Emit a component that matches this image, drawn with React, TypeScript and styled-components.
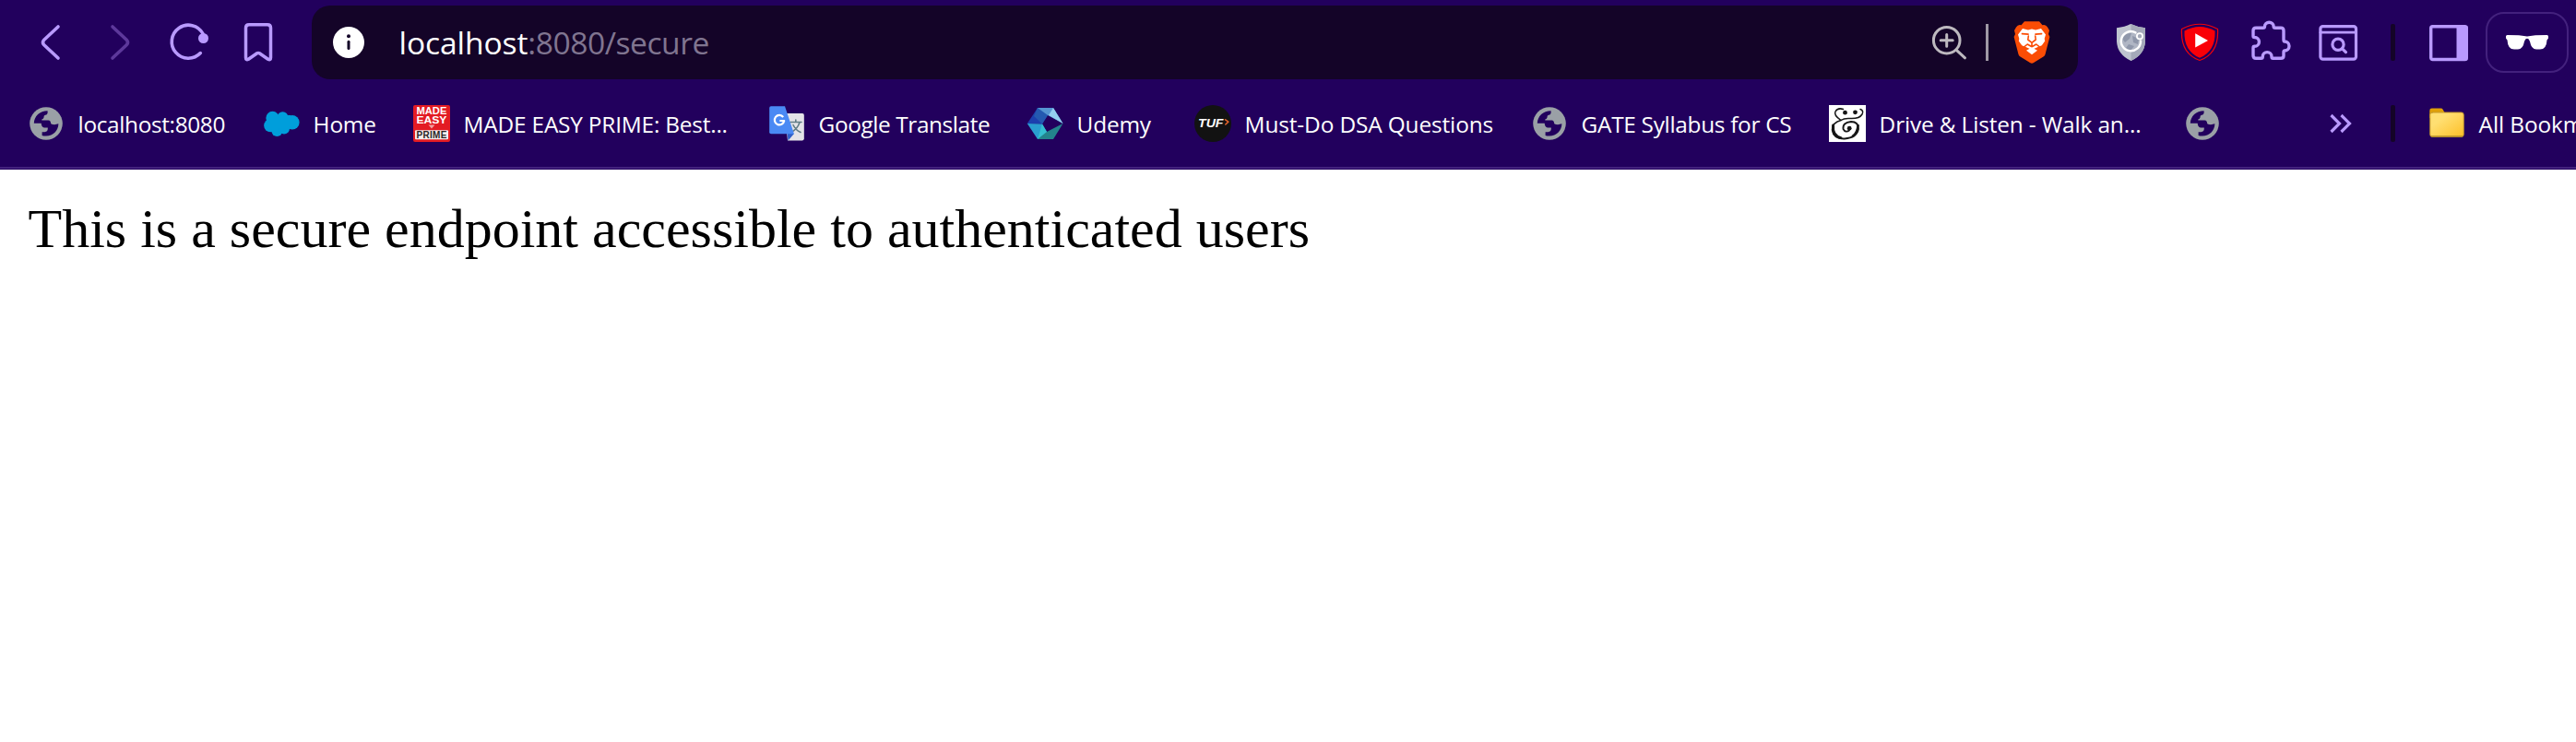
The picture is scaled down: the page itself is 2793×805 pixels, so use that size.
import React from 'react';
import styled, { createGlobalStyle } from 'styled-components';

const LILAC = '#b99aff';
const PURPLE = '#22005d';
const UI_FONT = '"Open Sans", "Noto Sans", sans-serif';

const GlobalStyle = createGlobalStyle`
  html, body { margin: 0; padding: 0; background: #fff; }
  body { overflow: hidden; }
  svg { display: block; flex: none; }
`;

const Window = styled.div`
  width: 2793px;
  height: 805px;
  overflow: hidden;
  display: flex;
  flex-direction: column;
  background: #fff;
`;

const Chrome = styled.header`
  background: ${PURPLE};
  height: 184px;
  box-sizing: border-box;
  display: flex;
  flex-direction: column;
  flex: none;
  overflow: hidden;
`;

const Toolbar = styled.div`
  height: 92px;
  display: flex;
  align-items: center;
  padding-left: 31px;
`;

const IconGroup = styled.div`
  display: flex;
  align-items: center;
  gap: 27px;
`;

const AddressBar = styled.div`
  display: flex;
  align-items: center;
  box-sizing: border-box;
  width: 1915px;
  height: 80px;
  margin: 0 33px 0 34px;
  padding: 0 26px 0 16px;
  border-radius: 20px;
  background: #140428;
`;

const Url = styled.div`
  flex: 1;
  margin-left: 30.5px;
  font: 400 33.6px/46px ${UI_FONT};
  letter-spacing: -0.45px;
  color: #807590;
  white-space: pre;
`;

const Host = styled.span`
  color: #fff;
  letter-spacing: -0.1px;
`;

const AddressDivider = styled.div`
  width: 3px;
  height: 40px;
  margin: 0 23px 0 16px;
  background: #9f99a5;
`;

const Divider = styled.div<{ $before: number; $after: number }>`
  width: 5px;
  height: 40px;
  border-radius: 2px;
  background: #140428;
  flex: none;
  margin: 0 ${(p) => p.$after}px 0 ${(p) => p.$before}px;
`;

const PrivatePill = styled.div`
  display: flex;
  align-items: center;
  justify-content: center;
  box-sizing: border-box;
  width: 90px;
  height: 66px;
  margin-left: 16px;
  border: 2px solid #43217d;
  border-radius: 20px;
  flex: none;
`;

const BookmarksBar = styled.div`
  height: 89px;
  display: flex;
  align-items: center;
  padding-left: 30px;
  box-sizing: border-box;
  padding-bottom: 5px;
`;

const BookmarkItem = styled.div<{ $width: number }>`
  width: ${(p) => p.$width}px;
  height: 40px;
  display: flex;
  align-items: center;
  gap: 14.6px;
  flex: none;
`;

const Label = styled.span<{ $tracking: number }>`
  padding-top: 2px;
  font: 400 24.4px/34px ${UI_FONT};
  letter-spacing: ${(p) => p.$tracking}px;
  color: #fff;
  white-space: nowrap;
`;

const ChromeEdge = styled.div`
  height: 2px;
  background: #43217d;
`;

const Page = styled.main`
  padding: 30px 30.5px;
`;

const Message = styled.div`
  font: 400 60px/69px "Liberation Serif", serif;
  color: #000;
  white-space: nowrap;
`;

function Icon({ size = 48, children }: { size?: number; children: React.ReactNode }) {
  return (
    <svg width={size} height={size} viewBox={`0 0 ${size} ${size}`} fill="none" strokeLinecap="round" strokeLinejoin="round">
      {children}
    </svg>
  );
}

const BackIcon = () => (
  <Icon><path d="M32 7 L16.5 21.5 Q14.5 24 16.5 26.5 L32 41" stroke={LILAC} strokeWidth="3.6" /></Icon>
);
const ForwardIcon = () => (
  <Icon><path d="M16 7 L31.5 21.5 Q33.5 24 31.5 26.5 L16 41" stroke="#5d389b" strokeWidth="3.6" /></Icon>
);
const ReloadIcon = () => (
  <Icon>
    <path d="M36.3 35.6 A18 18 0 1 1 39 14.5" stroke={LILAC} strokeWidth="3.6" />
    <circle cx="39.5" cy="19.5" r="5.5" fill={LILAC} />
  </Icon>
);
const BookmarkIcon = () => (
  <Icon>
    <path d="M14 4.8 H34 Q37.5 4.8 37.5 8.3 V40.5 Q37.5 43.6 34.6 42.2 L25.3 35.8 Q24 35 22.7 35.8 L13.4 42.2 Q10.5 43.6 10.5 40.5 V8.3 Q10.5 4.8 14 4.8Z" stroke={LILAC} strokeWidth="3.5" />
  </Icon>
);
const InfoIcon = () => (
  <Icon>
    <circle cx="24" cy="24" r="17" fill="#fff" />
    <circle cx="24" cy="17.3" r="2" fill="#140428" />
    <path d="M24 23.3 V30.6" stroke="#140428" strokeWidth="3" />
  </Icon>
);
const ZoomIcon = () => (
  <Icon>
    <g stroke="#bdb9bf" strokeWidth="3">
      <circle cx="21.7" cy="21.7" r="14.3" />
      <path d="M32.3 32.3 L41.5 40.8 M21.7 15.5 V28.3 M15.2 21.8 H28.2" />
    </g>
  </Icon>
);
const BraveIcon = () => (
  <Icon>
    <path d="M16 1.2 H32 L35.5 5.2 Q39 4 41 7.5 L43 11 L42 15 L43.4 18 L38.5 37 Q38 38.5 36.5 39.5 L26 46 Q24 47.4 22 46 L11.5 39.5 Q10 38.5 9.5 37 L4.6 18 L6 15 L5 11 L7 7.5 Q9 4 12.5 5.2Z" fill="#fb4d05" />
    <path d="M14 9 L20 10.5 L24 9.6 L28 10.5 L34 9 L39 15.5 L37.7 20 L38.2 22.5 L34.8 27.2 L30 29.3 L24 32 L18 29.3 L13.2 27.2 L9.8 22.5 L10.3 20 L9 15.5Z" fill="#fff" />
    <path d="M13.5 14.6 L20 15.2 M28 15.2 L34.5 14.6" stroke="#fb4d05" strokeWidth="1.8" />
    <path d="M20.3 17 L19.8 21 L24 24.3 L28.2 21 L27.7 17 M24 24.3 V27 M16 28.6 L19.2 26 L24 28.8 L28.8 26 L32 28.6" stroke="#fb4d05" strokeWidth="1.6" />
    <path d="M24 29.4 L30 32.7 L24 37.2 L18 32.7Z" fill="#fff" />
  </Icon>
);
const GuardIcon = () => (
  <Icon>
    <path d="M24 4 Q31 7.2 40 8.3 V23 Q39.3 37 24.5 44 Q9.7 37 9 23 V8.3 Q18 7.2 24 4Z" fill="#bfc4cf" />
    <path d="M24.5 4 Q31 7.2 40 8.3 V23 Q39.3 37 24.5 44Z" fill="#a5aab9" />
    <circle cx="24.5" cy="22.8" r="10.5" fill="#b0b6c4" />
    <path d="M15 20 Q19 13 25 14 L23 20 L18 24Z M26 17 L33 20 L32 26 L27 24Z M22 26 L28 28 L24 33 L19 30Z" fill="#8f97aa" />
    <path d="M29.5 13.4 A10.6 10.6 0 1 0 35 22.5" stroke="#fff" strokeWidth="2.4" />
    <circle cx="34" cy="17.3" r="3.1" fill="#a5aab9" stroke="#fff" strokeWidth="1.8" />
  </Icon>
);
const VideoShieldIcon = () => (
  <Icon>
    <path d="M4.5 9.5 Q24 -1 43.5 9.5 Q45 36 24 43.5 Q3 36 4.5 9.5Z" stroke="#f0000a" strokeWidth="1.2" />
    <path d="M7.5 11.5 Q24 2.5 40.5 11.5 Q41.5 33.5 24 40.8 Q6.5 33.5 7.5 11.5Z" fill="#f90008" />
    <path d="M19.2 14.2 V29.6 L33 22Z" fill="#fff" />
  </Icon>
);
const PuzzleIcon = () => (
  <Icon>
    <path
      d="M10 8.3 H17.5 Q19.5 8.3 19.5 6.5 A4.8 4.3 0 0 1 29.1 6.5 Q29.1 8.3 31 8.3 H37 Q40 8.3 40 11.3 V21 Q40 23 41 23 A5 5 0 0 1 41 33 Q40 33 40 35 V38.5 Q40 41.3 37 41.3 H28.5 Q27 41.3 27 39.5 A4.8 4.8 0 0 0 17.3 39.5 Q17.3 41.3 15.5 41.3 H10 Q7 41.3 7 38.3 V30 Q7 28.3 8.5 28.3 A4.9 4.9 0 0 0 8.5 18.5 Q7 18.5 7 17 V11.3 Q7 8.3 10 8.3Z"
      stroke={LILAC}
      strokeWidth="3.4"
    />
  </Icon>
);
const SearchWindowIcon = () => (
  <Icon>
    <g stroke={LILAC} strokeWidth="3.2">
      <rect x="4.9" y="6.6" width="38.6" height="35.6" rx="2.6" />
      <path d="M5 13.2 H43" strokeWidth="2.8" />
      <circle cx="24" cy="26.2" r="6.1" />
      <path d="M28.6 30.8 L32.4 34.6" />
    </g>
  </Icon>
);
const SidebarIcon = () => (
  <Icon>
    <rect x="4.7" y="6.7" width="38.6" height="35.8" rx="1.8" stroke={LILAC} strokeWidth="3.4" />
    <rect x="32.5" y="6" width="12" height="37" rx="1" fill={LILAC} />
  </Icon>
);
const GlassesIcon = () => (
  <Icon>
    <path d="M1 17.5 Q1 16 2.5 16 L15 16.3 L24 17.6 L33 16.3 L45.5 16 Q47 16 47 17.5 V19.5 L45.5 21.5 Q45 31.5 38 31.6 H34 Q28.5 31.5 27 23 Q26 19.8 24 19.8 Q22 19.8 21 23 Q19.5 31.5 14 31.6 H10 Q3 31.5 2.5 21.5 L1 19.5Z" fill="#fff" />
  </Icon>
);

const GlobeIcon = () => (
  <Icon size={40}>
    <circle cx="20" cy="20" r="17.8" fill="#9aa0a6" />
    <path d="M6.8 19.8 C7 12 13.5 6.2 21.6 6.3 V8.8 Q21.4 10.8 18.6 11 Q17.4 11.4 17.5 13.5 Q17.3 15 15.3 15.4 V16.6 H22.5 Q25 16.9 25.2 20.2 Q28.5 22 33.4 20.3 C33.2 28 27.5 33.7 19.8 33.6 Q17.5 33.7 15.6 33 V29.3 H18.4 Q21.8 28.8 21.8 25.8 V24.4 H18 Q14.9 24 14.7 19.8Z" fill={PURPLE} />
  </Icon>
);
const CloudIcon = () => (
  <Icon size={40}>
    <g fill="#009edb">
      <circle cx="10.5" cy="14" r="7.2" />
      <circle cx="21.5" cy="13.3" r="6" />
      <circle cx="31.8" cy="18.8" r="7.8" />
      <circle cx="8.2" cy="22.2" r="7" />
      <circle cx="15.3" cy="28" r="6" />
      <circle cx="23" cy="25.5" r="6" />
      <rect x="8" y="11" width="22" height="14" />
    </g>
  </Icon>
);
const MadeEasyIcon = () => (
  <Icon size={40}>
    <rect width="40" height="40" rx="2" fill="#e31b23" />
    <rect x="2" y="27.2" width="36" height="10" rx="1" fill="#f4eeee" />
    <g fontFamily='"Liberation Sans", sans-serif' fontWeight="700" fontSize="10">
      <text x="3.4" y="10.2" textLength="33" lengthAdjust="spacingAndGlyphs" fill="#fff">MADE</text>
      <text x="3.4" y="19.6" textLength="33" lengthAdjust="spacingAndGlyphs" fill="#fff">EASY</text>
      <text x="3.4" y="35.8" textLength="33" lengthAdjust="spacing" fill="#2b2626">PRIME</text>
    </g>
    <path d="M16.5 21.5 H23.5 L20 25.5Z" fill="#f0a0a0" />
  </Icon>
);
const TranslateIcon = () => (
  <Icon size={40}>
    <path d="M18 9 H37 Q38.8 9 38.8 10.8 V36.6 Q38.8 38.4 37 38.4 H21Z" fill="#e4e4e8" />
    <path d="M24 18.5 H36 M29.8 16 V18.5 M34 18.8 Q32 25.5 25 29.5 M27 21.5 Q29.5 27 35 29.5" stroke="#607d86" strokeWidth="1.6" />
    <path d="M20.5 31 H28 L21.5 38.5Z" fill="#3060c8" />
    <path d="M3 1.3 H18 L28 31.3 H3 Q1.2 31.3 1.2 29.5 V3.1 Q1.2 1.3 3 1.3Z" fill="#4a8af4" />
    <path d="M16.2 13 A5.2 5.2 0 1 0 17.2 17 H12.4" stroke="#fff" strokeWidth="2.2" strokeLinecap="butt" />
  </Icon>
);
const UdemyIcon = () => (
  <Icon size={40}>
    <path d="M12 3 L0.8 20 L17 20.5 L23 11Z" fill="#1c3fae" />
    <path d="M12 3 H29 L23 11 L10 13Z" fill="#2c64ac" />
    <path d="M12 3 L23 11 L17 20.5 L8 12Z" fill="#2459b0" />
    <path d="M29 3 L39.5 20 L23 11 L12 3Z" fill="#5596d2" />
    <path d="M29 3 L39.5 20 L24 11Z" fill="#94cdf0" />
    <path d="M0.8 20 L17 20.5 L22 29 L12 37Z" fill="#2a9fd0" />
    <path d="M17 20.5 L22 29 L29 37 H12Z" fill="#35bfd0" />
    <path d="M39.5 20 L22 29 L12 37 H29Z" fill="#23848c" />
  </Icon>
);
const TufIcon = () => (
  <Icon size={40}>
    <circle cx="20" cy="20" r="20" fill="#121212" />
    <text x="4" y="24" textLength="27.5" lengthAdjust="spacingAndGlyphs" fontFamily='"Liberation Sans", sans-serif' fontWeight="700" fontStyle="italic" fontSize="12.5" fill="#fff">TUF</text>
    <path d="M33.6 15.8 L36.8 18.2 L33.8 21" stroke="#e0612a" strokeWidth="1.6" />
  </Icon>
);
const AmpersandIcon = () => (
  <Icon size={40}>
    <rect width="40" height="40" fill="#fff" />
    <g stroke="#161616">
      <path d="M34 4.5 Q38 6 36 10 Q33 15 23 14.5 Q16.5 14 13 16.5 Q5 11 7 7 Q9.5 2.5 15.5 4.5" strokeWidth="1.5" />
      <path d="M13 16.5 Q3.5 19 3.6 27 Q5 37 17 36.5 Q30 35.5 32 26 Q32 18 24 18 Q14.5 19 15.5 26 Q18 30.5 22 27.5" strokeWidth="1.8" />
      <path d="M4.6 22 Q3.4 33 13 35.6" strokeWidth="3" />
      <path d="M31.6 22 Q31 30 26 33.5" strokeWidth="2.6" />
    </g>
    <g fill="#161616">
      <circle cx="17.5" cy="8.2" r="2.4" />
      <circle cx="28.5" cy="7.8" r="2.4" />
      <circle cx="22.2" cy="25.2" r="2.4" />
    </g>
  </Icon>
);
const FolderIcon = () => (
  <Icon size={40}>
    <defs>
      <linearGradient id="folder" x1="0" y1="0" x2="1" y2="1">
        <stop offset="0.3" stopColor="#ffdf72" />
        <stop offset="1" stopColor="#fdbf27" />
      </linearGradient>
    </defs>
    <path d="M1.3 6 Q1.3 3.6 3.7 3.6 H13.5 Q15 3.6 15.8 5 L18 9 V14 H1.3Z" fill="#e0a008" />
    <rect x="1.8" y="8" width="36.4" height="26.4" rx="2.4" fill="url(#folder)" stroke="#c79a2c" strokeWidth="1" />
    <path d="M3.5 34 H36.5" stroke="#b08a2a" strokeWidth="1.4" />
  </Icon>
);
const OverflowIcon = () => (
  <Icon>
    <path d="M13.5 15 L22.5 24 L13.5 33 M24.5 15 L33.5 24 L24.5 33" stroke={LILAC} strokeWidth="3.2" strokeLinecap="butt" strokeLinejoin="miter" />
  </Icon>
);

const bookmarks = [
  { icon: <GlobeIcon />, label: 'localhost:8080', width: 255, tracking: -0.35 },
  { icon: <CloudIcon />, label: 'Home', width: 163, tracking: -0.2 },
  { icon: <MadeEasyIcon />, label: 'MADE EASY PRIME: Best...', width: 385, tracking: -0.2 },
  { icon: <TranslateIcon />, label: 'Google Translate', width: 280, tracking: -0.4 },
  { icon: <UdemyIcon />, label: 'Udemy', width: 182, tracking: -0.2 },
  { icon: <TufIcon />, label: 'Must-Do DSA Questions', width: 365, tracking: -0.12 },
  { icon: <GlobeIcon />, label: 'GATE Syllabus for CS', width: 323, tracking: -0.3 },
  { icon: <AmpersandIcon />, label: 'Drive & Listen - Walk an...', width: 385, tracking: -0.14 },
  { icon: <GlobeIcon />, label: '', width: 146, tracking: 0 },
];

export default function App() {
  return (
    <Window>
      <GlobalStyle />
      <Chrome>
        <Toolbar>
          <IconGroup>
            <BackIcon />
            <ForwardIcon />
            <ReloadIcon />
            <BookmarkIcon />
          </IconGroup>
          <AddressBar>
            <InfoIcon />
            <Url><Host>localhost</Host>:8080/secure</Url>
            <ZoomIcon />
            <AddressDivider />
            <BraveIcon />
          </AddressBar>
          <IconGroup>
            <GuardIcon />
            <VideoShieldIcon />
            <PuzzleIcon />
            <SearchWindowIcon />
          </IconGroup>
          <Divider $before={33} $after={34} />
          <SidebarIcon />
          <PrivatePill><GlassesIcon /></PrivatePill>
        </Toolbar>
        <BookmarksBar>
          {bookmarks.map((b, i) => (
            <BookmarkItem key={i} $width={b.width}>
              {b.icon}
              {b.label && <Label $tracking={b.tracking}>{b.label}</Label>}
            </BookmarkItem>
          ))}
          <OverflowIcon />
          <Divider $before={30} $after={36} />
          <BookmarkItem $width={220}>
            <FolderIcon />
            <Label $tracking={-0.1}>All Bookmarks</Label>
          </BookmarkItem>
        </BookmarksBar>
        <ChromeEdge />
      </Chrome>
      <Page>
        <Message>This is a secure endpoint accessible to authenticated users</Message>
      </Page>
    </Window>
  );
}
